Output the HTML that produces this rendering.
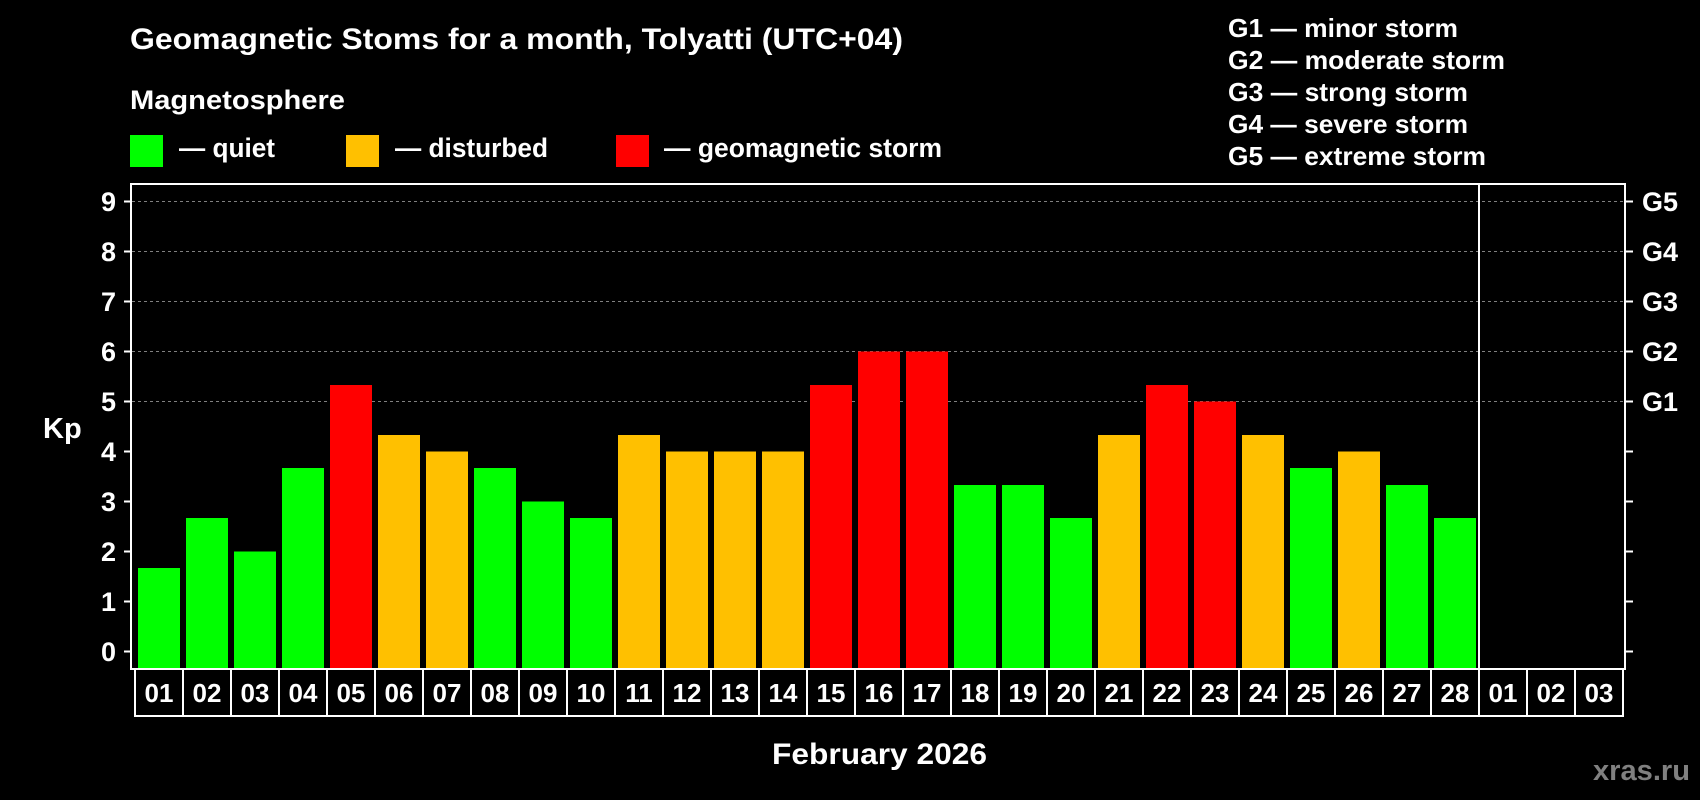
<!DOCTYPE html>
<html><head><meta charset="utf-8"><style>
html,body{margin:0;padding:0;background:#000;width:1700px;height:800px;overflow:hidden}
svg{display:block}
text{font-family:"Liberation Sans",Arial,sans-serif;font-weight:bold;fill:#fff}
</style></head><body>
<svg width="1700" height="800" viewBox="0 0 1700 800" xmlns="http://www.w3.org/2000/svg">
<rect width="1700" height="800" fill="#000"/>
<text x="130" y="49" font-size="30" textLength="773" lengthAdjust="spacingAndGlyphs">Geomagnetic Stoms for a month, Tolyatti (UTC+04)</text>
<text x="130" y="109" font-size="27" textLength="215" lengthAdjust="spacingAndGlyphs">Magnetosphere</text>
<rect x="130" y="135" width="33" height="32" fill="#00ff00"/>
<text x="179" y="157" font-size="27" textLength="96" lengthAdjust="spacingAndGlyphs">— quiet</text>
<rect x="346" y="135" width="33" height="32" fill="#ffc000"/>
<text x="395" y="157" font-size="27" textLength="153" lengthAdjust="spacingAndGlyphs">— disturbed</text>
<rect x="616" y="135" width="33" height="32" fill="#ff0000"/>
<text x="664" y="157" font-size="27" textLength="278" lengthAdjust="spacingAndGlyphs">— geomagnetic storm</text>
<g font-size="26">
<text x="1228" y="37" textLength="230" lengthAdjust="spacingAndGlyphs">G1 — minor storm</text>
<text x="1228" y="69" textLength="277" lengthAdjust="spacingAndGlyphs">G2 — moderate storm</text>
<text x="1228" y="101" textLength="240" lengthAdjust="spacingAndGlyphs">G3 — strong storm</text>
<text x="1228" y="133" textLength="240" lengthAdjust="spacingAndGlyphs">G4 — severe storm</text>
<text x="1228" y="165" textLength="258" lengthAdjust="spacingAndGlyphs">G5 — extreme storm</text>
</g>
<g stroke="#808080" stroke-width="1" stroke-dasharray="3,3">
<line x1="132" x2="1625" y1="201.5" y2="201.5"/>
<line x1="132" x2="1625" y1="251.5" y2="251.5"/>
<line x1="132" x2="1625" y1="301.5" y2="301.5"/>
<line x1="132" x2="1625" y1="351.5" y2="351.5"/>
<line x1="132" x2="1625" y1="401.5" y2="401.5"/>
</g>
<g>
<rect x="138" y="568" width="42" height="100" fill="#00ff00"/>
<rect x="186" y="518" width="42" height="150" fill="#00ff00"/>
<rect x="234" y="551.5" width="42" height="116.5" fill="#00ff00"/>
<rect x="282" y="468" width="42" height="200" fill="#00ff00"/>
<rect x="330" y="385" width="42" height="283" fill="#ff0000"/>
<rect x="378" y="435" width="42" height="233" fill="#ffc000"/>
<rect x="426" y="451.5" width="42" height="216.5" fill="#ffc000"/>
<rect x="474" y="468" width="42" height="200" fill="#00ff00"/>
<rect x="522" y="501.5" width="42" height="166.5" fill="#00ff00"/>
<rect x="570" y="518" width="42" height="150" fill="#00ff00"/>
<rect x="618" y="435" width="42" height="233" fill="#ffc000"/>
<rect x="666" y="451.5" width="42" height="216.5" fill="#ffc000"/>
<rect x="714" y="451.5" width="42" height="216.5" fill="#ffc000"/>
<rect x="762" y="451.5" width="42" height="216.5" fill="#ffc000"/>
<rect x="810" y="385" width="42" height="283" fill="#ff0000"/>
<rect x="858" y="351.5" width="42" height="316.5" fill="#ff0000"/>
<rect x="906" y="351.5" width="42" height="316.5" fill="#ff0000"/>
<rect x="954" y="485" width="42" height="183" fill="#00ff00"/>
<rect x="1002" y="485" width="42" height="183" fill="#00ff00"/>
<rect x="1050" y="518" width="42" height="150" fill="#00ff00"/>
<rect x="1098" y="435" width="42" height="233" fill="#ffc000"/>
<rect x="1146" y="385" width="42" height="283" fill="#ff0000"/>
<rect x="1194" y="401.5" width="42" height="266.5" fill="#ff0000"/>
<rect x="1242" y="435" width="42" height="233" fill="#ffc000"/>
<rect x="1290" y="468" width="42" height="200" fill="#00ff00"/>
<rect x="1338" y="451.5" width="42" height="216.5" fill="#ffc000"/>
<rect x="1386" y="485" width="42" height="183" fill="#00ff00"/>
<rect x="1434" y="518" width="42" height="150" fill="#00ff00"/>
</g>
<g stroke="#fff" stroke-width="2" fill="none">
<rect x="131" y="184" width="1494" height="485"/>
<line x1="1479" y1="184" x2="1479" y2="669"/>
</g>
<g stroke="#fff" stroke-width="2">
<line x1="124" x2="131" y1="201.5" y2="201.5"/><line x1="124" x2="131" y1="251.5" y2="251.5"/>
<line x1="124" x2="131" y1="301.5" y2="301.5"/><line x1="124" x2="131" y1="351.5" y2="351.5"/>
<line x1="124" x2="131" y1="401.5" y2="401.5"/><line x1="124" x2="131" y1="451.5" y2="451.5"/>
<line x1="124" x2="131" y1="501.5" y2="501.5"/><line x1="124" x2="131" y1="551.5" y2="551.5"/>
<line x1="124" x2="131" y1="601.5" y2="601.5"/><line x1="124" x2="131" y1="651.5" y2="651.5"/>
<line x1="1625" x2="1633" y1="201.5" y2="201.5"/><line x1="1625" x2="1633" y1="251.5" y2="251.5"/>
<line x1="1625" x2="1633" y1="301.5" y2="301.5"/><line x1="1625" x2="1633" y1="351.5" y2="351.5"/>
<line x1="1625" x2="1633" y1="401.5" y2="401.5"/><line x1="1625" x2="1633" y1="451.5" y2="451.5"/>
<line x1="1625" x2="1633" y1="501.5" y2="501.5"/><line x1="1625" x2="1633" y1="551.5" y2="551.5"/>
<line x1="1625" x2="1633" y1="601.5" y2="601.5"/><line x1="1625" x2="1633" y1="651.5" y2="651.5"/>
</g>
<g font-size="27" text-anchor="end">
<text x="116" y="211">9</text><text x="116" y="261">8</text><text x="116" y="311">7</text>
<text x="116" y="361">6</text><text x="116" y="411">5</text><text x="116" y="461">4</text>
<text x="116" y="511">3</text><text x="116" y="561">2</text><text x="116" y="611">1</text>
<text x="116" y="661">0</text>
</g>
<g font-size="27">
<text x="1642" y="211">G5</text><text x="1642" y="261">G4</text><text x="1642" y="311">G3</text>
<text x="1642" y="361">G2</text><text x="1642" y="411">G1</text>
</g>
<text x="43" y="438" font-size="29">Kp</text>
<g stroke="#fff" stroke-width="2" fill="none">
<rect x="135" y="669" width="1488" height="47"/>
<path d="M183 669V716M231 669V716M279 669V716M327 669V716M375 669V716M423 669V716M471 669V716M519 669V716M567 669V716M615 669V716M663 669V716M711 669V716M759 669V716M807 669V716M855 669V716M903 669V716M951 669V716M999 669V716M1047 669V716M1095 669V716M1143 669V716M1191 669V716M1239 669V716M1287 669V716M1335 669V716M1383 669V716M1431 669V716M1479 669V716M1527 669V716M1575 669V716"/>
</g>
<g font-size="26" text-anchor="middle">
<text x="159" y="702">01</text><text x="207" y="702">02</text><text x="255" y="702">03</text>
<text x="303" y="702">04</text><text x="351" y="702">05</text><text x="399" y="702">06</text>
<text x="447" y="702">07</text><text x="495" y="702">08</text><text x="543" y="702">09</text>
<text x="591" y="702">10</text><text x="639" y="702">11</text><text x="687" y="702">12</text>
<text x="735" y="702">13</text><text x="783" y="702">14</text><text x="831" y="702">15</text>
<text x="879" y="702">16</text><text x="927" y="702">17</text><text x="975" y="702">18</text>
<text x="1023" y="702">19</text><text x="1071" y="702">20</text><text x="1119" y="702">21</text>
<text x="1167" y="702">22</text><text x="1215" y="702">23</text><text x="1263" y="702">24</text>
<text x="1311" y="702">25</text><text x="1359" y="702">26</text><text x="1407" y="702">27</text>
<text x="1455" y="702">28</text><text x="1503" y="702">01</text><text x="1551" y="702">02</text>
<text x="1599" y="702">03</text>
</g>
<text x="772" y="764" font-size="30" textLength="215" lengthAdjust="spacingAndGlyphs">February 2026</text>
<text x="1593" y="780" font-size="29" style="fill:#808080" textLength="97" lengthAdjust="spacingAndGlyphs">xras.ru</text>
</svg>
</body></html>
